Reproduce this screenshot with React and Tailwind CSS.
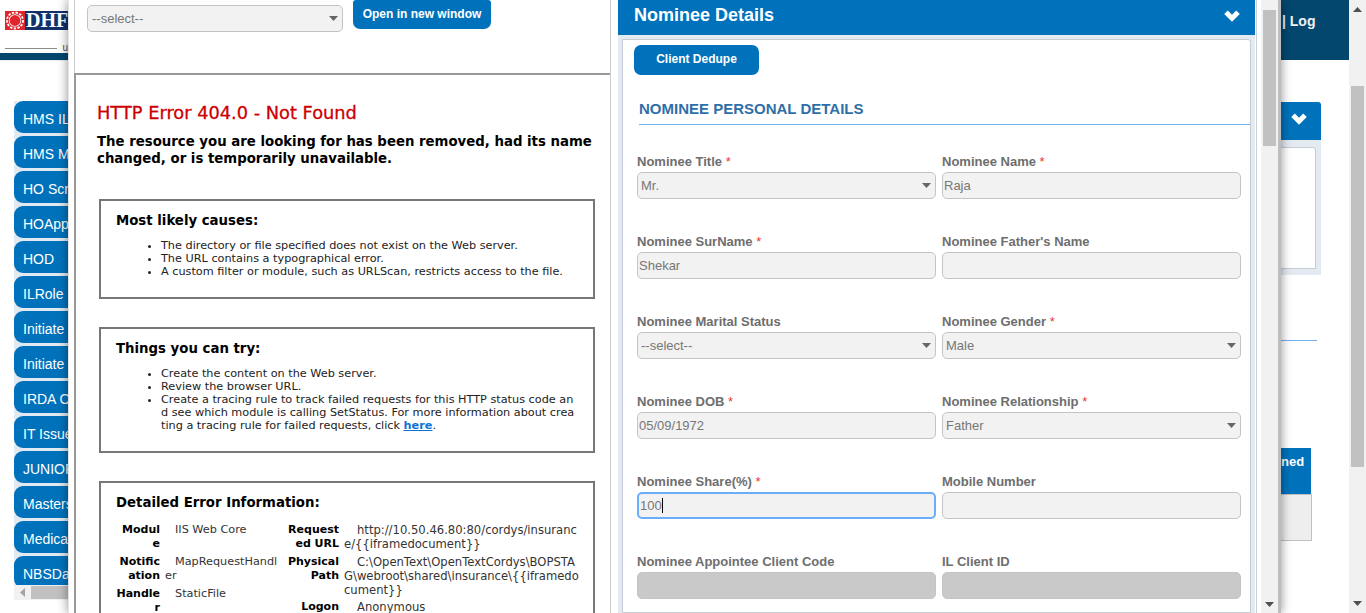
const MENU = [
  "HMS IL", "HMS M", "HO Scr", "HOApp", "HOD", "ILRole", "Initiate (", "Initiate (",
  "IRDA O", "IT Issue", "JUNIOR", "Masters", "Medical", "NBSDa",
];

const FIELDS = [
  [
    { label: "Nominee Title", req: true, value: "Mr.", select: true },
    { label: "Nominee Name", req: true, value: "Raja" },
  ],
  [
    { label: "Nominee SurName", req: true, value: "Shekar" },
    { label: "Nominee Father's Name" },
  ],
  [
    { label: "Nominee Marital Status", value: "--select--", select: true },
    { label: "Nominee Gender", req: true, value: "Male", select: true },
  ],
  [
    { label: "Nominee DOB", req: true, value: "05/09/1972" },
    { label: "Nominee Relationship", req: true, value: "Father", select: true },
  ],
  [
    { label: "Nominee Share(%)", req: true, value: "100", focus: true },
    { label: "Mobile Number" },
  ],
  [
    { label: "Nominee Appointee Client Code", disabled: true },
    { label: "IL Client ID", disabled: true },
  ],
];

function Tri({ up, className }) {
  return (
    <svg width="9" height="5" viewBox="0 0 9 5" className={className}>
      <path d={up ? "M4.5 0L9 5H0Z" : "M0 0H9L4.5 5Z"} fill="currentColor" />
    </svg>
  );
}

function Chevron() {
  return (
    <svg width="18" height="13" viewBox="0 0 18 13">
      <path d="M3 3.2L9 9.2L15 3.2" fill="none" stroke="white" strokeWidth="5" />
    </svg>
  );
}

function Field({ label, req, value, select, focus, disabled }) {
  let box = "border border-[#c4c4c4] bg-[#f2f2f2]";
  if (focus) box = "border-2 border-[#6aaefb] bg-[#f2f2f2]";
  if (disabled) box = "border border-[#c4c4c4] bg-[#c9c9c9]";
  return (
    <div className="w-[299px]">
      <div className="h-[19px] text-[13px] leading-[18px] font-bold text-[#6e6e6e]">
        {label}
        {req && <span className="font-normal text-[#e8392f]"> *</span>}
      </div>
      <div className={`flex h-[27px] items-center rounded-[5px] text-[13px] text-[#777] ${box} ${select ? "pl-[3px]" : "pl-[1px]"}`}>
        <span>{value}</span>
        {focus && <span className="h-[15px] w-px bg-black" />}
        {select && <Tri className="mr-[4px] ml-auto text-[#666]" />}
      </div>
    </div>
  );
}

function ErrorBox({ title, className, children }) {
  return (
    <div className={`ml-[23px] w-[496px] border-2 border-[#777] pl-[15px] ${className}`}>
      <div className="pt-[11px] text-[13.3px] leading-[17px] font-bold text-black">{title}</div>
      {children}
    </div>
  );
}

function Bullets({ items }) {
  return (
    <ul className="mt-[10px] list-disc pl-[45px] text-[11.25px] leading-[13px] text-[#222]">
      {items.map((it, i) => (
        <li key={i} className="whitespace-nowrap">{it}</li>
      ))}
    </ul>
  );
}

function InfoRow({ name, lines, labelW, indent, h, valueSize }) {
  return (
    <div className={`flex ${h}`}>
      <div className={`shrink-0 pr-[5px] text-right text-[11px] font-bold text-black ${labelW}`}>
        {name.map((n, i) => (
          <div key={i}>{n}</div>
        ))}
      </div>
      <div className={`whitespace-nowrap ${valueSize}`}>
        {lines.map((l, i) => (
          <div key={i} className={i === 0 ? indent : ""}>{l}</div>
        ))}
      </div>
    </div>
  );
}

function ErrorPage() {
  return (
    <div className="h-full border-t-2 border-l-2 border-[#999] pt-[28px] font-['DejaVu_Sans',sans-serif]">
      <div className="pl-[21px] text-[17.8px] leading-[20px] text-[#cc0000] [-webkit-text-stroke:0.3px_#cc0000]">HTTP Error 404.0 - Not Found</div>
      <div className="mt-[10px] pl-[21px] text-[13.3px] leading-[17px] font-bold whitespace-nowrap text-black">
        The resource you are looking for has been removed, had its name<br />
        changed, or is temporarily unavailable.
      </div>
      <ErrorBox title="Most likely causes:" className="mt-[32px] h-[100px]">
        <Bullets
          items={[
            "The directory or file specified does not exist on the Web server.",
            "The URL contains a typographical error.",
            "A custom filter or module, such as URLScan, restricts access to the file.",
          ]}
        />
      </ErrorBox>
      <ErrorBox title="Things you can try:" className="mt-[28px] h-[126px]">
        <Bullets
          items={[
            "Create the content on the Web server.",
            "Review the browser URL.",
            <>
              Create a tracing rule to track failed requests for this HTTP status code an<br />
              d see which module is calling SetStatus. For more information about crea<br />
              ting a tracing rule for failed requests, click{" "}
              <span className="font-bold text-[#0b74d8] underline">here</span>.
            </>,
          ]}
        />
      </ErrorBox>
      <ErrorBox title="Detailed Error Information:" className="mt-[28px] h-[160px]">
        <div className="mt-[12px] flex text-[11.25px] leading-[14px] text-[#333]">
          <div className="w-[169px] shrink-0">
            <InfoRow name={["Modul", "e"]} lines={["IIS Web Core"]} labelW="w-[49px]" indent="pl-[10px]" h="h-[32px]" />
            <InfoRow name={["Notific", "ation"]} lines={["MapRequestHandl", "er"]} labelW="w-[49px]" indent="pl-[10px]" h="h-[32px]" />
            <InfoRow name={["Handle", "r"]} lines={["StaticFile"]} labelW="w-[49px]" indent="pl-[10px]" h="h-[32px]" />
          </div>
          <div className="flex-1">
            <InfoRow name={["Request", "ed URL"]} lines={["http://10.50.46.80:80/cordys/insuranc", "e/{{iframedocument}}"]} labelW="w-[59px]" indent="pl-[13px]" h="h-[32px]" valueSize="text-[11.6px]" />
            <InfoRow name={["Physical", "Path"]} lines={["C:\\OpenText\\OpenTextCordys\\BOPSTA", "G\\webroot\\shared\\insurance\\{{iframedo", "cument}}"]} labelW="w-[59px]" indent="pl-[13px]" h="h-[45px]" valueSize="text-[11.6px]" />
            <InfoRow name={["Logon"]} lines={["Anonymous"]} labelW="w-[59px]" indent="pl-[13px]" h="h-[14px]" valueSize="text-[11.6px]" />
          </div>
        </div>
      </ErrorBox>
    </div>
  );
}

function NomineePanel() {
  return (
    <div className="flex h-full w-[637px] shrink-0 flex-col bg-[#e3eaf2]">
      <div className="flex h-[35px] shrink-0 items-center justify-between bg-[#0072bc] pr-[14px] pb-[4px] pl-[16px] text-[18px] font-bold text-white">
        <span>Nominee Details</span>
        <Chevron />
      </div>
      <div className="mt-[4px] ml-[4px] mr-[4px] flex-1 overflow-hidden rounded-tr-[3px] border border-[#c5ccd3] bg-white pl-[11px]">
        <button className="mt-[5px] h-[30px] w-[125px] rounded-[7px] bg-[#0072bc] pb-[3px] text-[12px] font-bold text-white">
          Client Dedupe
        </button>
        <div className="mt-[25px] ml-[5px] border-b border-[#6cb0ef] pb-[6px] text-[15px] leading-[18px] font-bold text-[#2f6fa8]">
          NOMINEE PERSONAL DETAILS
        </div>
        <div className="mt-[28px] ml-[3px] flex flex-col gap-[34px]">
          {FIELDS.map((row, i) => (
            <div key={i} className="flex gap-[6px]">
              {row.map((f) => (
                <Field key={f.label} {...f} />
              ))}
            </div>
          ))}
        </div>
      </div>
    </div>
  );
}

function Dialog() {
  return (
    <div className="absolute top-0 left-[68px] flex h-[613px] w-[1213px] border-l border-[#e4e4e4] bg-white shadow-[0_0_10px_rgba(0,0,0,0.45)]">
      <div className="ml-[5px] h-full w-[537px] shrink-0 border-r border-[#ccc] font-['Liberation_Sans',sans-serif]">
        <div className="flex h-[73px] items-start border-l border-[#ccc] pl-[12px]">
          <div className="mt-[5px] flex h-[27px] w-[256px] items-center rounded-[5px] border border-[#c4c4c4] bg-[#f2f2f2] pl-[4px] text-[13px] text-[#777]">
            <span>--select--</span>
            <Tri className="mr-[4px] ml-auto text-[#666]" />
          </div>
          <button className="ml-[10px] h-[29px] w-[138px] rounded-b-[7px] rounded-t-[3px] bg-[#0072bc] pb-[2px] text-[12px] font-bold text-white">
            Open in new window
          </button>
        </div>
        <div className="h-[540px] overflow-hidden">
          <ErrorPage />
        </div>
      </div>
      <div className="ml-[7px]">
        <NomineePanel />
      </div>
      <div className="ml-px h-full w-[5px] shrink-0 border-l border-[#c9d0d6] bg-white" />
      <div className="flex h-full w-[17px] shrink-0 flex-col bg-[#f1f1f1] px-[2px] pt-[10px]">
        <div className="h-[136px] bg-[#c1c1c1]" />
        <Tri className="mt-auto mb-[6px] self-center text-[#505050]" />
      </div>
      <div className="h-full w-[3px] shrink-0 bg-[#bdbdbd]" />
    </div>
  );
}

function Logo() {
  return (
    <div className="flex h-[53px] items-start bg-white pl-[5px]">
      <div className="flex w-[63px] flex-col">
        <div className="mt-[11px] flex h-[19px] items-center overflow-hidden bg-[#13306b]">
          <svg width="20" height="19" viewBox="0 0 20 19" className="shrink-0">
            <rect width="20" height="19" fill="#e0262d" />
            <circle cx="10" cy="9.5" r="8" fill="none" stroke="white" strokeWidth="1.8" strokeDasharray="2.4 1.4" />
            <circle cx="10" cy="9.5" r="6.2" fill="white" />
            <circle cx="10" cy="9.5" r="5.4" fill="#e0262d" />
          </svg>
          <span className="ml-[1px] font-['Liberation_Serif',serif] text-[20px] leading-[19px] font-bold text-white">DHF</span>
        </div>
        <div className="mt-[14px] flex items-center">
          <div className="h-px w-[55px] bg-[#8a8a8a]" />
          <span className="ml-[5px] text-[10px] leading-[8px] text-[#555]">u</span>
        </div>
      </div>
    </div>
  );
}

function PageBehind() {
  return (
    <div className="h-[613px] w-[1349px] font-['Liberation_Sans',sans-serif]">
      <div className="flex h-[60px]">
        <div className="flex-1 border-b-[7px] border-[#03476f]">
          <Logo />
        </div>
        <div className="w-[68px] bg-[#03476f] pt-[13px] pl-px text-[14px] leading-[16px] font-bold text-[#eef2f5]">| Log</div>
      </div>
      <div className="flex">
        <div className="w-[100px] shrink-0">
          <div className="h-[41px] border-t border-[#eee]" />
          <div className="ml-[14px] flex h-[484px] flex-col gap-[3px] overflow-hidden bg-[#e1e9f2]">
            {MENU.map((m) => (
              <div key={m} className="flex h-[32px] shrink-0 items-center overflow-hidden rounded-[9px] bg-[#0072bc] pt-[4px] pl-[9px] text-[14px] whitespace-nowrap text-white">
                {m}
              </div>
            ))}
          </div>
          <div className="ml-[14px] flex h-[15px] items-center bg-[#f1f1f1]">
            <svg width="5" height="9" viewBox="0 0 5 9" className="ml-[6px] text-[#a3a3a3]">
              <path d="M5 0V9L0 4.5Z" fill="currentColor" />
            </svg>
            <div className="ml-[6px] h-[13px] flex-1 bg-[#c1c1c1]" />
          </div>
        </div>
        <div className="ml-[1181px] w-[68px] shrink-0">
          <div className="mt-[42px] flex h-[38px] w-[40px] items-start justify-end rounded-tr-[3px] bg-[#0072bc] pt-[10px] pr-[13px]">
            <Chevron />
          </div>
          <div className="h-[135px] w-[40px] bg-[#e3eaf2] pt-[7px] pr-[5px] pb-[6px]">
            <div className="h-full rounded-tr-[3px] border-t border-r border-b border-[#c5ccd3] bg-white" />
          </div>
          <div className="mt-[65px] h-px w-[36px] bg-[#6cb0ef]" />
          <div className="mt-[107px] h-[46px] w-[30px] bg-[#0072bc] pt-[6px] pr-[9px] text-[13px] font-bold whitespace-nowrap text-white">
            <div className="text-right leading-[16px]">ned</div>
          </div>
          <div className="h-[47px] w-[31px] border-t border-r border-b border-[#c0c0c0] bg-[#eeeeee]" />
        </div>
      </div>
    </div>
  );
}

export default function App() {
  return (
    <div className="relative flex h-[613px] w-[1366px] overflow-hidden bg-white font-['Liberation_Sans',sans-serif]">
      <PageBehind />
      <div className="flex h-full w-[17px] shrink-0 flex-col bg-[#f1f1f1] px-[2px]">
        <Tri up className="mt-[7px] self-center text-[#505050]" />
        <div className="mt-[74px] h-[381px] bg-[#c1c1c1]" />
        <Tri className="mt-auto mb-[7px] self-center text-[#505050]" />
      </div>
      <Dialog />
    </div>
  );
}
